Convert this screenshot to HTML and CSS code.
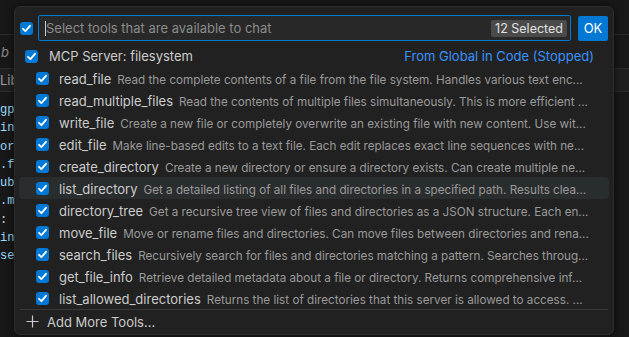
FILE: index.html
```html
<!DOCTYPE html>
<html lang="en">
<head>
    <meta charset="UTF-8">
    <meta name="viewport" content="width=device-width, initial-scale=1.0">
    <title>Configure Tools</title>
    <link rel="stylesheet" href="styles.css">
</head>
<body>
    <!-- editor behind the quick pick -->
    <div class="editor">
        <div class="titlebar"></div>
        <div class="tabs"><span class="tab-name">b</span></div>
        <div class="crumbs"><span>Lib</span></div>
        <div class="code">
            <div class="ln blue">gpt_model</div>
            <div class="ln blue">include</div>
            <div class="ln blue">org.api</div>
            <div class="ln blue">.files</div>
            <div class="ln blue">ubuntu</div>
            <div class="ln blue">.main</div>
            <div class="ln">:</div>
            <div class="ln blue">input</div>
            <div class="ln blue">server</div>
        </div>
    </div>

    <!-- tool picker -->
    <div class="picker">
        <div class="picker-head">
            <span class="check"><svg viewBox="0 0 13 13"><path d="M3 6.8 L5.4 9.2 L10 3.8"/></svg></span>
            <div class="search">
                <span class="caret"></span>
                <span class="placeholder">Select tools that are available to chat</span>
                <span class="count">12 Selected</span>
            </div>
            <button class="ok">OK</button>
        </div>

        <div class="list">
            <div class="row server">
                <span class="check"><svg viewBox="0 0 13 13"><path d="M3 6.8 L5.4 9.2 L10 3.8"/></svg></span>
                <span class="name">MCP Server: filesystem</span>
                <span class="source">From Global in Code (Stopped)</span>
            </div>
            <div class="row tool">
                <span class="check"><svg viewBox="0 0 13 13"><path d="M3 6.8 L5.4 9.2 L10 3.8"/></svg></span>
                <span class="label"><span class="name">read_file</span><span class="desc">Read the complete contents of a file from the file system. Handles various text enc...</span></span>
            </div>
            <div class="row tool">
                <span class="check"><svg viewBox="0 0 13 13"><path d="M3 6.8 L5.4 9.2 L10 3.8"/></svg></span>
                <span class="label"><span class="name">read_multiple_files</span><span class="desc">Read the contents of multiple files simultaneously. This is more efficient ...</span></span>
            </div>
            <div class="row tool">
                <span class="check"><svg viewBox="0 0 13 13"><path d="M3 6.8 L5.4 9.2 L10 3.8"/></svg></span>
                <span class="label"><span class="name">write_file</span><span class="desc">Create a new file or completely overwrite an existing file with new content. Use wit...</span></span>
            </div>
            <div class="row tool">
                <span class="check"><svg viewBox="0 0 13 13"><path d="M3 6.8 L5.4 9.2 L10 3.8"/></svg></span>
                <span class="label"><span class="name">edit_file</span><span class="desc">Make line-based edits to a text file. Each edit replaces exact line sequences with ne...</span></span>
            </div>
            <div class="row tool">
                <span class="check"><svg viewBox="0 0 13 13"><path d="M3 6.8 L5.4 9.2 L10 3.8"/></svg></span>
                <span class="label"><span class="name">create_directory</span><span class="desc">Create a new directory or ensure a directory exists. Can create multiple ne...</span></span>
            </div>
            <div class="row tool active">
                <span class="check"><svg viewBox="0 0 13 13"><path d="M3 6.8 L5.4 9.2 L10 3.8"/></svg></span>
                <span class="label"><span class="name">list_directory</span><span class="desc">Get a detailed listing of all files and directories in a specified path. Results clea...</span></span>
            </div>
            <div class="row tool">
                <span class="check"><svg viewBox="0 0 13 13"><path d="M3 6.8 L5.4 9.2 L10 3.8"/></svg></span>
                <span class="label"><span class="name">directory_tree</span><span class="desc">Get a recursive tree view of files and directories as a JSON structure. Each en...</span></span>
            </div>
            <div class="row tool">
                <span class="check"><svg viewBox="0 0 13 13"><path d="M3 6.8 L5.4 9.2 L10 3.8"/></svg></span>
                <span class="label"><span class="name">move_file</span><span class="desc">Move or rename files and directories. Can move files between directories and rena...</span></span>
            </div>
            <div class="row tool">
                <span class="check"><svg viewBox="0 0 13 13"><path d="M3 6.8 L5.4 9.2 L10 3.8"/></svg></span>
                <span class="label"><span class="name">search_files</span><span class="desc">Recursively search for files and directories matching a pattern. Searches throug...</span></span>
            </div>
            <div class="row tool">
                <span class="check"><svg viewBox="0 0 13 13"><path d="M3 6.8 L5.4 9.2 L10 3.8"/></svg></span>
                <span class="label"><span class="name">get_file_info</span><span class="desc">Retrieve detailed metadata about a file or directory. Returns comprehensive inf...</span></span>
            </div>
            <div class="row tool">
                <span class="check"><svg viewBox="0 0 13 13"><path d="M3 6.8 L5.4 9.2 L10 3.8"/></svg></span>
                <span class="label"><span class="name">list_allowed_directories</span><span class="desc">Returns the list of directories that this server is allowed to access. ...</span></span>
            </div>
        </div>

        <div class="more">
            <svg class="plus" viewBox="0 0 13 13"><path d="M6.5 0.5 V12.5 M0.5 6.5 H12.5"/></svg>
            <span>Add More Tools...</span>
        </div>
    </div>
</body>
</html>
```

FILE: styles.css
```css
body { margin: 0; background: #181818; font-family: Inter, "Noto Sans", sans-serif; overflow: hidden; }

.editor { height: 337px; }
.titlebar { height: 34px; border-bottom: 1px solid #2b2b2b; }
.tabs { height: 33px; border-bottom: 1px solid #2b2b2b; display: flex; align-items: center; }
.tab-name { font-style: italic; color: #8a8a8a; font-size: 13px; padding-left: 1px; }
.crumbs { height: 22px; background: #1f1f1f; border-bottom: 1px solid #2b2b2b; display: flex; align-items: center; color: #a0a0a0; font-size: 13px; }
.code { padding-top: 9px; font-family: "Liberation Mono", monospace; font-size: 12px; line-height: 18.3px; color: #d4d4d4; }
.ln.blue { color: #9cdcfe; }

.picker { position: absolute; left: 14px; top: 6px; width: 600px; height: 329px; box-sizing: border-box; background: #212121; border: 1px solid #2c2c2c; border-radius: 6px; box-shadow: 0 0 8px rgba(0, 0, 0, 0.6); }

.check { width: 13px; height: 13px; flex: none; background: #0078d4; border-radius: 3px; display: flex; }
.check svg { width: 13px; height: 13px; fill: none; stroke: #ffffff; stroke-width: 1.8; stroke-linecap: round; stroke-linejoin: round; }

.picker-head { display: flex; align-items: center; padding: 8px 5px 4px 5px; }
.picker-head .check { margin-right: 5px; }
.search { flex: 1; height: 26px; box-sizing: border-box; border: 1px solid #0078d4; background: #282828; border-radius: 2px; display: flex; align-items: center; padding: 0 3px 0 6px; }
.caret { width: 1px; height: 15px; background: #cccccc; }
.placeholder { flex: 1; color: #8b8b8b; font-size: 13px; }
.count { background: #4a4a4a; color: #e0e0e0; font-size: 12.5px; border-radius: 2px; padding: 1px 4px; }
.ok { margin-left: 7px; width: 30px; height: 25px; border: none; border-radius: 2px; background: #0078d4; color: #ffffff; font-family: Inter, sans-serif; font-size: 13px; padding: 0; }

.list { padding: 0 4px; }
.row { height: 22px; display: flex; align-items: center; border-radius: 4px; padding-right: 15px; }
.row.active { background: #2a2d2e; }
.server { padding-left: 6px; }
.server .check { margin-right: 11px; }
.server .name { flex: 1; color: #cccccc; font-size: 13px; }
.source { color: #3794ff; font-size: 13px; }
.tool { padding-left: 17px; padding-right: 10px; }
.tool .check { margin-right: 10px; }
.label { flex: 1; min-width: 0; white-space: nowrap; overflow: hidden; }
.tool .name { color: #cccccc; font-size: 13px; margin-right: 6px; }
.desc { color: #9a9a9a; font-size: 11.7px; }

.more { margin: 0 5px; border-top: 1px solid #383838; height: 23px; display: flex; align-items: center; padding-left: 6px; color: #cccccc; font-size: 13px; }
.plus { width: 13px; height: 13px; fill: none; stroke: #cccccc; stroke-width: 1.2; margin-right: 8px; }
```
